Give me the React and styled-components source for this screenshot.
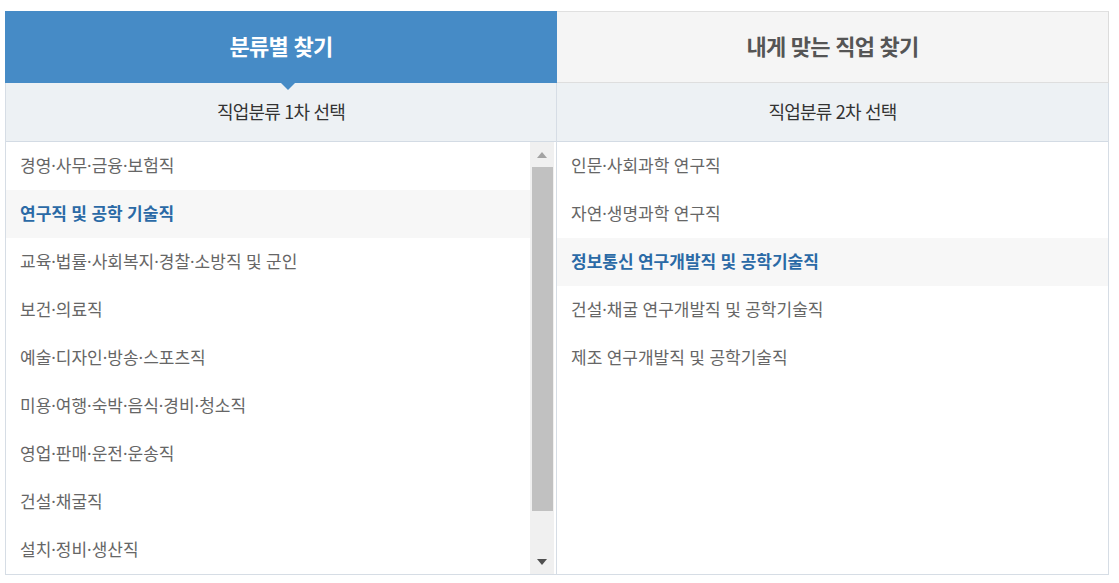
import React from "react";
import styled, { createGlobalStyle, css } from "styled-components";

const GlobalStyle = createGlobalStyle`
  html, body { margin: 0; padding: 0; background: #ffffff; }
  body { font-family: "Noto Sans", "Noto Sans CJK KR", sans-serif; }
  * { box-sizing: border-box; }
`;

const Page = styled.div`
  padding: 11px 0 0 5px;
`;

const Board = styled.div`
  width: 1104px;
  display: grid;
  grid-template-columns: 552px 552px;
`;

const Tab = styled.div`
  position: relative;
  height: 72px;
  display: flex;
  align-items: center;
  justify-content: center;
  padding-bottom: 4px;
  font-family: "Noto Sans CJK KR", sans-serif;
  font-size: 22px;
  font-weight: 700;
  letter-spacing: -0.7px;
  word-spacing: 1px;
  ${(p) =>
    p.$active
      ? css`
          background: #468bc6;
          color: #ffffff;
        `
      : css`
          background: #f5f5f5;
          color: #555555;
          border-top: 1px solid #e0e0e0;
          border-right: 1px solid #dcdcdc;
          border-bottom: 1px solid #dedede;
        `}
`;

const Pointer = styled.span`
  position: absolute;
  left: calc(50% + 7px);
  bottom: -7px;
  transform: translateX(-50%);
  width: 0;
  height: 0;
  border-left: 7px solid transparent;
  border-right: 7px solid transparent;
  border-top: 7px solid #468bc6;
  z-index: 2;
`;

const Panel = styled.div`
  display: flex;
  flex-direction: column;
  border-right: 1px solid #d6dde5;
  border-bottom: 1px solid #d6dde5;
  ${(p) => p.$first && css`border-left: 1px solid #d6dde5;`}
`;

const Heading = styled.div`
  height: 59px;
  display: flex;
  align-items: center;
  justify-content: center;
  padding-bottom: 2px;
  background: #edf1f4;
  border-bottom: 1px solid #d3dbe4;
  color: #333333;
  font-family: "Noto Sans CJK KR", sans-serif;
  font-size: 18px;
  letter-spacing: -0.8px;
  word-spacing: 1px;
`;

const Body = styled.div`
  height: 432px;
  display: flex;
  overflow: hidden;
`;

const List = styled.ul`
  flex: 1;
  list-style: none;
  margin: 0;
  padding: 0;
  overflow: hidden;
`;

const Item = styled.li`
  height: 48px;
  display: flex;
  align-items: center;
  padding: 0 0 4px 14px;
  font-size: 17px;
  color: ${(p) => (p.$selected ? "#2b6aa6" : "#666666")};
  font-weight: ${(p) => (p.$selected ? 700 : 400)};
  background: ${(p) => (p.$selected ? "#f7f7f7" : "transparent")};
  white-space: nowrap;
`;

const Track = styled.div`
  width: 24px;
  margin-right: 2px;
  background: #f0f0f0;
  display: flex;
  flex-direction: column;
`;

const ArrowButton = styled.div`
  height: 25px;
  display: flex;
  align-items: center;
  justify-content: center;
`;

const Arrow = styled.span`
  width: 0;
  height: 0;
  border-left: 5px solid transparent;
  border-right: 5px solid transparent;
  ${(p) =>
    p.$up
      ? css`border-bottom: 6px solid #a3a3a3;`
      : css`border-top: 6px solid #505050;`}
`;

const ThumbArea = styled.div`
  flex: 1;
  padding: 0 1px 0 2px;
`;

const Thumb = styled.div`
  height: 344px;
  background: #c1c1c1;
`;

const firstLevel = [
  "경영·사무·금융·보험직",
  "연구직 및 공학 기술직",
  "교육·법률·사회복지·경찰·소방직 및 군인",
  "보건·의료직",
  "예술·디자인·방송·스포츠직",
  "미용·여행·숙박·음식·경비·청소직",
  "영업·판매·운전·운송직",
  "건설·채굴직",
  "설치·정비·생산직",
];

const secondLevel = [
  "인문·사회과학 연구직",
  "자연·생명과학 연구직",
  "정보통신 연구개발직 및 공학기술직",
  "건설·채굴 연구개발직 및 공학기술직",
  "제조 연구개발직 및 공학기술직",
];

export default function App() {
  return (
    <>
      <GlobalStyle />
      <Page>
        <Board>
          <Tab $active>
            분류별 찾기
            <Pointer />
          </Tab>
          <Tab>내게 맞는 직업 찾기</Tab>

          <Panel $first>
            <Heading>직업분류 1차 선택</Heading>
            <Body>
              <List>
                {firstLevel.map((t, i) => (
                  <Item key={t} $selected={i === 1}>
                    {t}
                  </Item>
                ))}
              </List>
              <Track>
                <ArrowButton>
                  <Arrow $up />
                </ArrowButton>
                <ThumbArea>
                  <Thumb />
                </ThumbArea>
                <ArrowButton>
                  <Arrow />
                </ArrowButton>
              </Track>
            </Body>
          </Panel>

          <Panel>
            <Heading>직업분류 2차 선택</Heading>
            <Body>
              <List>
                {secondLevel.map((t, i) => (
                  <Item key={t} $selected={i === 2}>
                    {t}
                  </Item>
                ))}
              </List>
            </Body>
          </Panel>
        </Board>
      </Page>
    </>
  );
}
